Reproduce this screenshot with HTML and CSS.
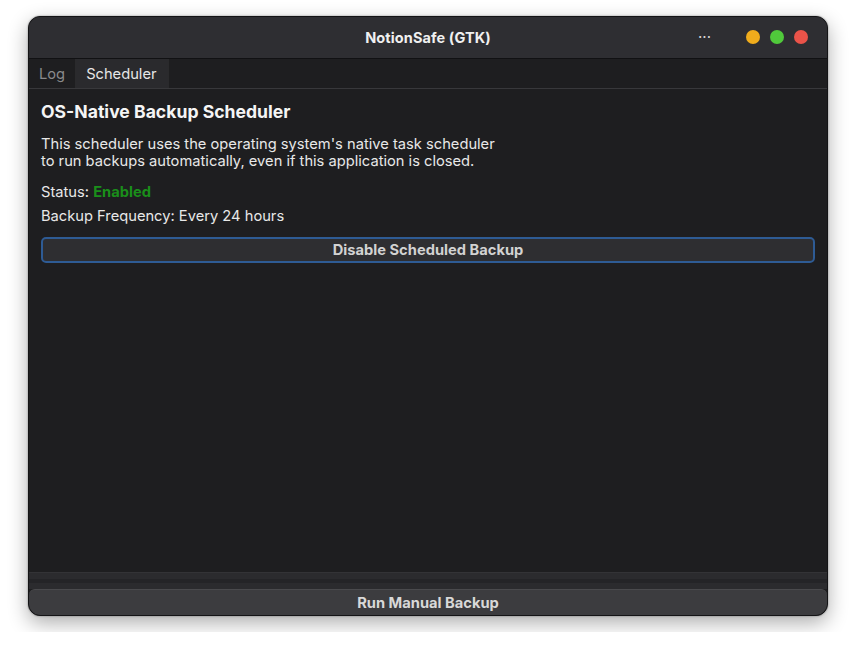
FILE: index.html
```html
<!DOCTYPE html>
<html>
<head>
<meta charset="utf-8">
<link rel="stylesheet" href="styles.css">
</head>
<body>
<div class="window">
  <div class="titlebar">
    <div class="title">NotionSafe (GTK)</div>
    <div class="controls">
      <span class="more">···</span>
      <span class="dot yellow"></span>
      <span class="dot green"></span>
      <span class="dot red"></span>
    </div>
  </div>
  <div class="tabs">
    <div class="tab">Log</div>
    <div class="tab active">Scheduler</div>
  </div>
  <div class="content">
    <h1 class="heading">OS-Native Backup Scheduler</h1>
    <p class="desc">This scheduler uses the operating system's native task scheduler<br>to run backups automatically, even if this application is closed.</p>
    <div class="status">Status: <span class="enabled">Enabled</span></div>
    <div class="freq">Backup Frequency: Every 24 hours</div>
    <button class="btn-disable">Disable Scheduled Backup</button>
  </div>
  <div class="footer">
    <div class="band"></div>
    <div class="band dark"></div>
    <div class="band"></div>
    <button class="btn-run">Run Manual Backup</button>
  </div>
</div>
</body>
</html>
```
FILE: styles.css
```css
html, body {
  margin: 0;
  padding: 0;
  background: #ffffff;
}
body {
  padding: 16px 28px;
  font-family: Inter, "Noto Sans", "DejaVu Sans", sans-serif;
}
.window {
  width: 800px;
  height: 600px;
  box-sizing: border-box;
  border: 1px solid #141416;
  border-radius: 12px;
  background: #1e1e20;
  overflow: hidden;
  display: flex;
  flex-direction: column;
  box-shadow: 0 7px 20px rgba(0,0,0,0.32), 0 0 2px rgba(0,0,0,0.4);
}
.titlebar {
  height: 41px;
  flex: none;
  background: #2e2e32;
  border-bottom: 1px solid #111113;
  position: relative;
  display: flex;
  align-items: center;
  justify-content: center;
}
.title {
  color: #f0f0f0;
  font-weight: 700;
  font-size: 14.5px;
  letter-spacing: 0.1px;
  margin-top: -1px;
}
.controls {
  position: absolute;
  right: 19px;
  top: 0;
  height: 41px;
  display: flex;
  align-items: center;
  gap: 10px;
}
.more {
  color: #d8d8d8;
  font-size: 15px;
  margin-right: 25px;
  margin-top: -3px;
}
.dot {
  width: 14px;
  height: 14px;
  border-radius: 50%;
  display: inline-block;
  margin-top: -2px;
}
.yellow { background: #f0ac1c; }
.green { background: #50c93b; }
.red { background: #ea5349; }
.tabs {
  height: 29px;
  flex: none;
  display: flex;
  border-bottom: 1px solid #38383b;
  background: #1e1e20;
}
.tab {
  padding: 1px 10px 0 10px;
  line-height: 28px;
  font-size: 14.7px;
  color: #8a8a8c;
  border-right: 1px solid #2a2a2c;
}
.tab.active {
  background: #2a2a2d;
  color: #e6e6e6;
  padding-right: 11px;
}
.content {
  flex: 1;
  padding: 11px 12px 0 12px;
  color: #e8e8e8;
}
.heading {
  margin: 0;
  font-size: 17.6px;
  line-height: 24px;
  font-weight: 700;
  color: #f5f5f5;
}
.desc {
  margin: 12px 0 0 0;
  font-size: 14.7px;
  line-height: 17px;
}
.status {
  margin-top: 12px;
  font-size: 14.7px;
  line-height: 20px;
}
.enabled {
  color: #1a8f1a;
  font-weight: 700;
}
.freq {
  margin-top: 4px;
  font-size: 14.7px;
  line-height: 20px;
}
.btn-disable {
  margin-top: 11px;
  width: 100%;
  height: 26px;
  box-sizing: border-box;
  border: 2px solid #2e5b94;
  border-radius: 5px;
  background: #2e2e31;
  color: #d2d2d2;
  font-family: inherit;
  font-weight: 700;
  font-size: 14.7px;
  padding: 0;
}
.footer {
  flex: none;
  display: flex;
  flex-direction: column;
  border-top: 1px solid #333336;
}
.band {
  height: 6px;
  background: #2b2b2e;
}
.band.dark {
  height: 4px;
  background: #242427;
}
.btn-run {
  height: 26px;
  box-sizing: border-box;
  border: none;
  border-top: 1px solid #4a4a4d;
  border-radius: 6px 6px 11px 11px;
  background: #3c3c3f;
  color: #d8d8d8;
  font-family: inherit;
  font-weight: 700;
  font-size: 14.7px;
  padding: 1px 0 0 0;
}
```
